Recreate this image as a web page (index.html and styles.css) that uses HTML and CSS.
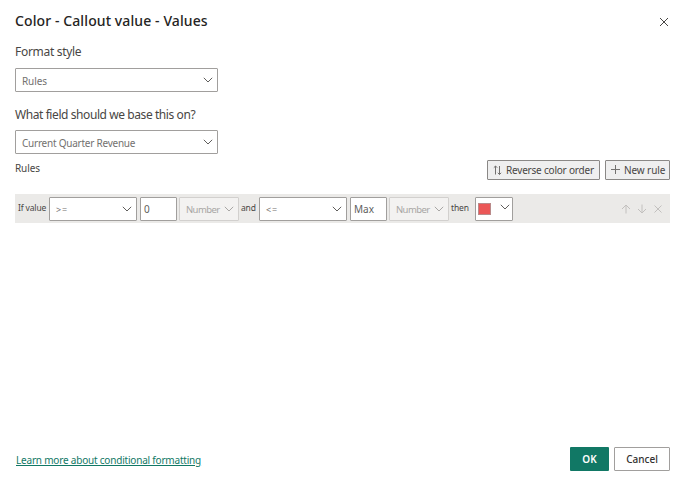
FILE: index.html
```html
<!DOCTYPE html>
<html lang="en">
<head>
<meta charset="utf-8">
<title>Color - Callout value - Values</title>
<link rel="stylesheet" href="styles.css">
</head>
<body>
<main class="dialog">
  <header class="header">
    <h1 class="title"><span>Color - Callout value - Values</span></h1>
    <svg class="close" width="10" height="10" viewBox="0 0 10 10"><path d="M1 1l8 8M9 1l-8 8"/></svg>
  </header>
  <div class="label label-style"><span>Format style</span></div>
  <div class="select field"><span class="t-rules">Rules</span><svg class="chev" width="10" height="6" viewBox="0 0 10 6"><path d="M.8 .8L5 5L9.2 .8"/></svg></div>
  <div class="label label-base"><span>What field should we base this on?</span></div>
  <div class="select field"><span class="t-field">Current Quarter Revenue</span><svg class="chev" width="10" height="6" viewBox="0 0 10 6"><path d="M.8 .8L5 5L9.2 .8"/></svg></div>
  <div class="toolbar">
    <span class="rules-label">Rules</span>
    <div class="tool reverse"><svg width="10" height="11" viewBox="0 0 10 11"><path d="M2.5 9.5V1M.8 2.7L2.5 1l1.7 1.7M6.5 1v8.5M4.8 7.8L6.5 9.5l1.7-1.7"/></svg><span class="t-reverse">Reverse color order</span></div>
    <div class="tool new"><svg width="10" height="10" viewBox="0 0 10 10"><path d="M4.5 0v9M0 4.5h9"/></svg><span class="t-new">New rule</span></div>
  </div>
  <div class="rule">
    <span class="word w-if">If value</span>
    <div class="select op"><span>&gt;=</span><svg class="chev" width="10" height="6" viewBox="0 0 10 6"><path d="M.8 .8L5 5L9.2 .8"/></svg></div>
    <div class="input">0</div>
    <div class="select kind"><span>Number</span><svg class="chev" width="10" height="6" viewBox="0 0 10 6"><path d="M.8 .8L5 5L9.2 .8"/></svg></div>
    <span class="word w-and">and</span>
    <div class="select op"><span>&lt;=</span><svg class="chev" width="10" height="6" viewBox="0 0 10 6"><path d="M.8 .8L5 5L9.2 .8"/></svg></div>
    <div class="input">Max</div>
    <div class="select kind"><span>Number</span><svg class="chev" width="10" height="6" viewBox="0 0 10 6"><path d="M.8 .8L5 5L9.2 .8"/></svg></div>
    <span class="word w-then">then</span>
    <div class="select color"><i class="swatch"></i><svg class="chev" width="10" height="6" viewBox="0 0 10 6"><path d="M.8 .8L5 5L9.2 .8"/></svg></div>
    <div class="actions">
      <svg width="10" height="10" viewBox="0 0 10 10"><path d="M5 9.5V1M1 5l4-4 4 4"/></svg>
      <svg width="10" height="10" viewBox="0 0 10 10"><path d="M5 .5V9M1 5l4 4 4-4"/></svg>
      <svg width="10" height="10" viewBox="0 0 10 10"><path d="M1.5 1.5l7 7M8.5 1.5l-7 7"/></svg>
    </div>
  </div>
  <footer class="footer">
    <a class="link">Learn more about conditional formatting</a>
    <div class="btn ok">OK</div>
    <div class="btn cancel">Cancel</div>
  </footer>
</main>
</body>
</html>
```

FILE: styles.css
```css
* { box-sizing: border-box; }
body {
  margin: 0;
  background: #fff;
  font-family: "Noto Sans", "Open Sans", sans-serif;
  color: #484644;
}
svg { fill: none; stroke: #605e5c; stroke-width: 1; flex: none; }
.dialog {
  width: 687px;
  height: 485px;
  padding: 10px 17px 14px 15px;
  display: flex;
  flex-direction: column;
  white-space: nowrap;
}
.header { display: flex; align-items: center; justify-content: space-between; height: 22px; }
.title { margin: 0; font-size: 14px; font-weight: 500; line-height: 22px; color: #252423; letter-spacing: .1px; }
.close { margin: 2px 1px 0 0; stroke: #484644; }
.label { font-size: 12px; line-height: 18px; }
.label-style { margin: 11px 0 7px; letter-spacing: -.3px; }
.label-base { margin: 14px 0 6px; letter-spacing: -.42px; }
.select, .input {
  display: flex;
  align-items: center;
  justify-content: space-between;
  height: 24px;
  border: 1px solid #a19f9d;
  border-radius: 1px;
  background: #fff;
  color: #73716f;
  font-size: 10px;
  flex: none;
}
.field { width: 203px; padding: 1px 4px 0 6px; }
.field .chev { margin-top: -1px; }
.t-field { letter-spacing: -.24px; }
.t-rules { letter-spacing: -.1px; }
.toolbar { display: flex; align-items: center; height: 20px; margin-top: 6px; }
.rules-label { font-size: 10px; letter-spacing: -.1px; margin: -5px auto 0 0; }
.tool {
  display: flex;
  align-items: center;
  height: 20px;
  border: 1px solid #8a8886;
  border-radius: 1px;
  background: #efefef;
  font-size: 10px;
  padding-left: 5px;
}
.tool svg { stroke: #73716f; }
.reverse { width: 113px; margin-right: 5px; }
.reverse span { margin-left: 3px; letter-spacing: -.2px; }
.new { width: 65px; }
.new span { margin-left: 3px; letter-spacing: -.1px; }
.rule {
  display: flex;
  align-items: center;
  height: 29px;
  margin-top: 14px;
  padding-left: 3px;
  background: #ebeae8;
}
.word { font-size: 8.5px; flex: none; margin-top: -2px; letter-spacing: -.15px; }
.w-if { width: 31px; }
.op { width: 88px; padding: 1px 4px 0 6px; margin-right: 3px; font-size: 9px; }
.op span { letter-spacing: .9px; margin-top: 1px; }
.input { width: 37px; padding: 1px 3px 0; margin-right: 2px; font-size: 10px; color: #605e5c; }
.kind { width: 60px; padding: 1px 4px 0 6px; margin-right: 2px; background: #f3f2f1; border-color: #d2d0ce; color: #a8a6a4; font-size: 9.5px; letter-spacing: -.6px; }
.kind svg { stroke: #a8a6a4; }
.w-and { width: 18px; }
.w-then { width: 24px; }
.color { width: 38px; padding: 0 2px; }
.color .chev { margin-top: -4px; }
.swatch { width: 13px; height: 12px; background: #eb5757; border: 1px solid #b98a8a; }
.actions { display: flex; gap: 6px; margin: 0 7px 0 auto; }
.actions svg { stroke: #c2c0be; }
.footer { display: flex; align-items: center; height: 24px; margin-top: auto; }
.link { font-size: 10px; letter-spacing: -.2px; color: #117865; text-decoration: underline; margin: 2px auto 0 1px; }
.btn {
  height: 24px;
  border-radius: 1px;
  font-size: 10px;
  font-weight: 600;
  line-height: 24px;
  text-align: center;
}
.ok { width: 39px; margin-right: 5px; background: #117865; color: #fff; }
.cancel { width: 56px; border: 1px solid #a19f9d; line-height: 23px; color: #323130; font-weight: 500; }
```
